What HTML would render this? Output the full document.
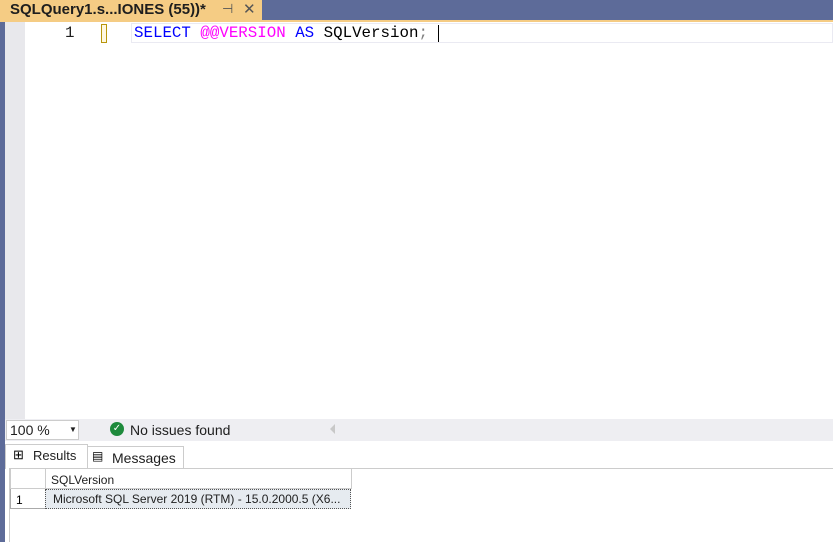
<!DOCTYPE html><html><head><style>
body{margin:0;width:833px;height:542px;position:relative;overflow:hidden;background:#fff;font-family:"Liberation Sans",sans-serif}
div{position:absolute;box-sizing:border-box}
.mono{font-family:"Liberation Mono",monospace;font-size:15.8px}
</style></head><body>
<div style="left:0;top:0;width:833px;height:20px;background:#5d6b99"></div>
<div style="left:0;top:0;width:262px;height:20px;background:#f5cc84"></div>
<div style="left:0;top:20px;width:833px;height:2px;background:#f5cc84"></div>
<div style="left:10px;top:1px;font-size:15px;font-weight:bold;color:#1e1e1e;white-space:nowrap">SQLQuery1.s...IONES (55))*</div>
<div style="left:222px;top:1px;font-size:13px;color:#555">⊣</div>
<div style="left:243px;top:0px;font-size:15px;color:#555">✕</div>
<div style="left:0;top:22px;width:5px;height:520px;background:#5d6b99"></div>
<div style="left:5px;top:22px;width:20px;height:397px;background:#e8e8ec"></div>
<div style="left:131px;top:23px;width:702px;height:20px;border:1px solid #eaeaf2"></div>
<div class="mono" style="left:65px;top:24px;color:#1e1e1e">1</div>
<div style="left:101px;top:24px;width:6px;height:19px;border:1px solid #b8960c;background:#fff8e0"></div>
<div class="mono" style="left:134px;top:24px;white-space:pre"><span style="color:#0000ff">SELECT</span> <span style="color:#ff00ff">@@VERSION</span> <span style="color:#0000ff">AS</span> <span style="color:#000">SQLVersion</span><span style="color:#808080">;</span></div>
<div style="left:438px;top:25px;width:1px;height:17px;background:#000"></div>
<div style="left:5px;top:419px;width:828px;height:22px;background:#eeeef2"></div>
<div style="left:6px;top:420px;width:73px;height:20px;background:#fff;border:1px solid #ccc;font-size:14px;padding:1px 0 0 3px;color:#1e1e1e">100 %<span style="position:absolute;left:62px;top:4px;font-size:8px">▼</span></div>
<div style="left:110px;top:422px;width:14px;height:14px;border-radius:50%;background:#1e8a3c;color:#fff;font-size:10px;text-align:center;line-height:14px">✓</div>
<div style="left:130px;top:422px;font-size:14px;color:#1e1e1e">No issues found</div>
<div style="left:330px;top:424px;width:0;height:0;border-top:5px solid transparent;border-bottom:5px solid transparent;border-right:5px solid #c8c8c8"></div>
<div style="left:5px;top:441px;width:828px;height:101px;background:#fff"></div>
<div style="left:5px;top:444px;width:83px;height:25px;background:#fff;border:1px solid #ccc;border-bottom:none"></div>
<div style="left:13px;top:447px;font-size:13px">⊞</div>
<div style="left:33px;top:448px;font-size:13px;color:#1e1e1e">Results</div>
<div style="left:87px;top:446px;width:97px;height:22px;border:1px solid #ccc;border-bottom:none;background:#fff"></div>
<div style="left:92px;top:449px;font-size:12px">▤</div>
<div style="left:112px;top:450px;font-size:14px;color:#1e1e1e">Messages</div>
<div style="left:9px;top:468px;width:824px;height:1px;background:#ccc"></div>
<div style="left:9px;top:469px;width:1px;height:73px;background:#ccc"></div>
<div style="left:10px;top:469px;width:342px;height:20px;border:1px solid #ccc;border-top:none;background:#fff"></div>
<div style="left:45px;top:469px;width:1px;height:20px;background:#ccc"></div>
<div style="left:51px;top:473px;font-size:12px;color:#1e1e1e">SQLVersion</div>
<div style="left:10px;top:489px;width:36px;height:20px;border:1px solid #aaa;border-top:none"></div>
<div style="left:16px;top:493px;font-size:12px">1</div>
<div style="left:45px;top:489px;width:306px;height:20px;background:#e6ebf0;border:1px dotted #555"></div>
<div style="left:53px;top:492px;font-size:12px;color:#1e1e1e">Microsoft SQL Server 2019 (RTM) - 15.0.2000.5 (X6...</div>
</body></html>
